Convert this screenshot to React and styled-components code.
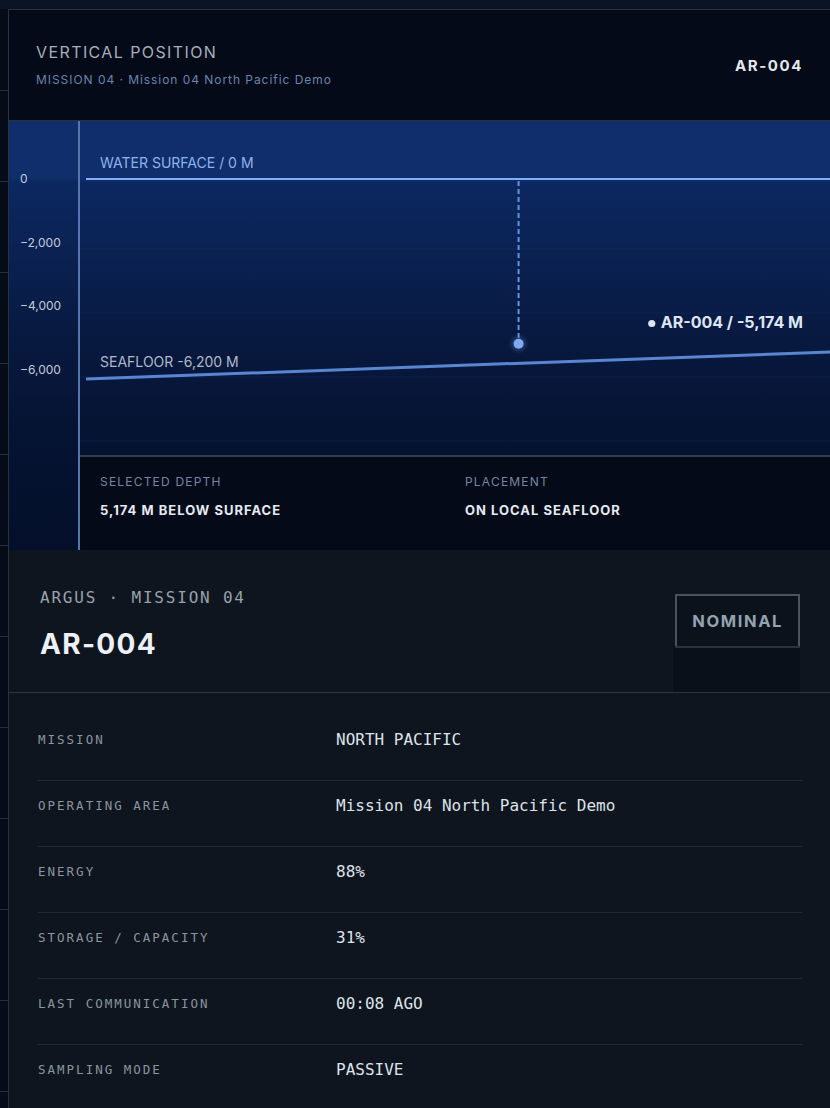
import React from 'react';
import styled, { createGlobalStyle } from 'styled-components';

const SANS = `Inter, "Noto Sans", "Liberation Sans", sans-serif`;
const MONO = `"DejaVu Sans Mono", "Liberation Mono", monospace`;

const GlobalStyle = createGlobalStyle`
  html, body {
    margin: 0;
    padding: 0;
  }

  body {
    background-color: #060c17;
    background-image:
      linear-gradient(180deg, #0b1424 0, #0b1424 9px, transparent 9px),
      repeating-linear-gradient(180deg, transparent 0, transparent 90px, #262e38 90px, #262e38 91px);
    font-family: ${SANS};
    -webkit-font-smoothing: antialiased;
  }
`;

const Panel = styled.div`
  margin: 9px 0 0 8px;
  border-top: 1px solid #2b323b;
  border-left: 1px solid #2b323b;
  background: #0e151e;
  overflow: hidden;
`;

const Header = styled.header`
  display: flex;
  align-items: center;
  justify-content: space-between;
  height: 110px;
  padding: 0 27px;
  background: #040a17;
  border-bottom: 1px solid #2a3039;
`;

const TitleGroup = styled.div`
  display: flex;
  flex-direction: column;
  gap: 12px;
  padding-bottom: 1px;
`;

const Title = styled.h2`
  margin: 0;
  font-size: 16px;
  font-weight: 400;
  letter-spacing: 1.4px;
  color: #a4afbd;
  line-height: 18px;
`;

const Subtitle = styled.div`
  font-size: 12px;
  letter-spacing: 0.95px;
  color: #6a84ae;
  line-height: 14px;
`;

const HeaderTag = styled.div`
  font-size: 15px;
  font-weight: 700;
  letter-spacing: 1.6px;
  color: #e3e8f0;
`;

/* depth chart */

const ChartBlock = styled.section`
  display: grid;
  grid-template-columns: 71px 1fr;
  grid-template-rows: 334px 95px;
`;

const AxisColumn = styled.div`
  grid-row: 1 / 3;
  position: relative;
  border-right: 2px solid #5575ac;
  background: linear-gradient(180deg, #0f2e6b 0, #0f2e6b 56px, #0c2861 62px, #08193f 220px, #051230 334px, #04102a 429px);
`;

const Tick = styled.span`
  position: absolute;
  left: 11px;
  font-size: 12px;
  line-height: 14px;
  color: #c3ccd9;
  transform: translateY(-50%);
`;

const Plot = styled.div`
  background: linear-gradient(180deg, #0f2e6b 0, #0f2e6b 57px, #0c2861 62px, #08193f 220px, #051230 334px);
`;

const PlotSvg = styled.svg`
  display: block;
  width: 100%;
  height: 334px;
  font-family: ${SANS};
`;

const Readout = styled.div`
  display: grid;
  grid-template-columns: 365px 1fr;
  padding: 0 20px;
  align-items: center;
  background: #040a17;
  border-top: 2px solid #323c4c;
`;

const ReadoutItem = styled.div`
  display: flex;
  flex-direction: column;
  gap: 13px;
  padding-bottom: 14px;
`;

const ReadoutLabel = styled.span`
  font-size: 12px;
  letter-spacing: 1.2px;
  color: #7587a3;
  line-height: 14px;
`;

const ReadoutValue = styled.span`
  font-size: 13px;
  font-weight: 700;
  letter-spacing: 1px;
  color: #e4eaf2;
  line-height: 16px;
`;

/* unit card */

const UnitHead = styled.section`
  display: flex;
  justify-content: space-between;
  align-items: flex-start;
  height: 142px;
  padding: 0 30px 0 31px;
  border-bottom: 1px solid #2d3440;
`;

const UnitTitles = styled.div`
  display: flex;
  flex-direction: column;
  gap: 20px;
  padding-top: 38px;
`;

const Kicker = styled.span`
  font-family: ${MONO};
  font-size: 16px;
  letter-spacing: 1.8px;
  color: #98a2ad;
  line-height: 20px;
`;

const UnitName = styled.h1`
  margin: 0;
  font-size: 28px;
  font-weight: 700;
  letter-spacing: 1.3px;
  color: #edf1f7;
  line-height: 32px;
`;

const Status = styled.div`
  position: relative;
  margin-top: 44px;
  padding: 0 15px;
  height: 50px;
  display: flex;
  align-items: center;
  border: 2px solid #49525e;
  background: #0b121b;
  font-size: 16.5px;
  font-weight: 700;
  letter-spacing: 1.6px;
  color: #93a3af;

  &::after {
    content: '';
    position: absolute;
    top: 100%;
    left: -4px;
    right: -2px;
    height: 46px;
    background: rgba(5, 12, 22, 0.45);
  }
`;

const FieldList = styled.dl`
  margin: 0;
  padding: 22px 28px 0 29px;
`;

const Field = styled.div`
  display: grid;
  grid-template-columns: 298px 1fr;
  align-items: center;
  padding: 15px 0 30px;
  border-bottom: 1px solid ${p => (p.last ? 'transparent' : '#1f2833')};
  line-height: 20px;
`;

const FieldLabel = styled.dt`
  font-family: ${MONO};
  font-size: 12.5px;
  letter-spacing: 2px;
  color: #8b959f;
`;

const FieldValue = styled.dd`
  margin: 0;
  font-family: ${MONO};
  font-size: 16px;
  color: #dde3ea;
`;

const fields = [
  ['MISSION', 'NORTH PACIFIC'],
  ['OPERATING AREA', 'Mission 04 North Pacific Demo'],
  ['ENERGY', '88%'],
  ['STORAGE / CAPACITY', '31%'],
  ['LAST COMMUNICATION', '00:08 AGO'],
  ['SAMPLING MODE', 'PASSIVE'],
];

// depth → y inside the plot (0 m sits at 58px, 2,000 m per 63.7px)
const depthY = d => 58 + (d / 2000) * 63.7;
const ticks = [0, -2000, -4000, -6000];

const fmt = n => (n < 0 ? '\u2212' : '') + Math.abs(n).toLocaleString('en-US');

const DepthPlot = () => {
  const unitY = depthY(5174);
  return (
    <PlotSvg viewBox="0 0 749 334" preserveAspectRatio="none">
      <defs>
        <radialGradient id="glow">
          <stop offset="0" stopColor="#6f9cf0" stopOpacity="0.45" />
          <stop offset="1" stopColor="#6f9cf0" stopOpacity="0" />
        </radialGradient>
      </defs>

      {[128, 192, 256, 320].map(y => (
        <line key={y} x1="0" x2="749" y1={y} y2={y} stroke="#2d4f8e" strokeOpacity="0.18" />
      ))}

      <line x1="6" x2="749" y1="58" y2="58" stroke="#80b0f4" strokeWidth="2" />
      <text x="20" y="47" fontSize="14" fill="#8fb3ec">WATER SURFACE / 0 M</text>

      <line x1="6" x2="749" y1="258" y2="231" stroke="#5a86d1" strokeWidth="3" />
      <text x="20" y="246" fontSize="14" fill="#aeb9c9">SEAFLOOR -6,200 M</text>

      <line x1="438" x2="438" y1="60" y2={unitY - 6} stroke="#6592dc" strokeWidth="2" strokeDasharray="5 3" />
      <circle cx="438" cy={unitY} r="10" fill="url(#glow)" />
      <circle cx="438" cy={unitY} r="5" fill="#7fa9f2" />

      <circle cx="571" cy="202.5" r="3.6" fill="#dbe4f1" />
      <text x="722" y="207.5" fontSize="16" fontWeight="700" fill="#dde6f2" textAnchor="end">
        AR-004 / -5,174 M
      </text>
    </PlotSvg>
  );
};

const App = () => (
  <>
    <GlobalStyle />
    <Panel>
      <Header>
        <TitleGroup>
          <Title>VERTICAL POSITION</Title>
          <Subtitle>MISSION 04 · Mission 04 North Pacific Demo</Subtitle>
        </TitleGroup>
        <HeaderTag>AR-004</HeaderTag>
      </Header>

      <ChartBlock>
        <AxisColumn>
          {ticks.map(t => (
            <Tick key={t} style={{ top: depthY(-t) }}>{fmt(t)}</Tick>
          ))}
        </AxisColumn>
        <Plot>
          <DepthPlot />
        </Plot>
        <Readout>
          <ReadoutItem>
            <ReadoutLabel>SELECTED DEPTH</ReadoutLabel>
            <ReadoutValue>5,174 M BELOW SURFACE</ReadoutValue>
          </ReadoutItem>
          <ReadoutItem>
            <ReadoutLabel>PLACEMENT</ReadoutLabel>
            <ReadoutValue>ON LOCAL SEAFLOOR</ReadoutValue>
          </ReadoutItem>
        </Readout>
      </ChartBlock>

      <UnitHead>
        <UnitTitles>
          <Kicker>ARGUS · MISSION 04</Kicker>
          <UnitName>AR-004</UnitName>
        </UnitTitles>
        <Status>NOMINAL</Status>
      </UnitHead>

      <FieldList>
        {fields.map(([label, value], i) => (
          <Field key={label} last={i === fields.length - 1}>
            <FieldLabel>{label}</FieldLabel>
            <FieldValue>{value}</FieldValue>
          </Field>
        ))}
      </FieldList>
    </Panel>
  </>
);

export default App;
